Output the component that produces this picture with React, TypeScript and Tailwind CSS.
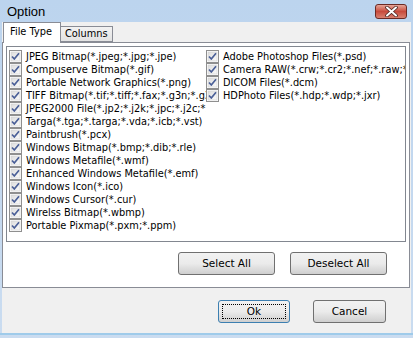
import React from 'react';

const leftTypes = [
  'JPEG Bitmap(*.jpeg;*.jpg;*.jpe)',
  'Compuserve Bitmap(*.gif)',
  'Portable Network Graphics(*.png)',
  'TIFF Bitmap(*.tif;*.tiff;*.fax;*.g3n;*.g3f;*.xif)',
  'JPEG2000 File(*.jp2;*.j2k;*.jpc;*.j2c;*.jpx)',
  'Targa(*.tga;*.targa;*.vda;*.icb;*.vst)',
  'Paintbrush(*.pcx)',
  'Windows Bitmap(*.bmp;*.dib;*.rle)',
  'Windows Metafile(*.wmf)',
  'Enhanced Windows Metafile(*.emf)',
  'Windows Icon(*.ico)',
  'Windows Cursor(*.cur)',
  'Wirelss Bitmap(*.wbmp)',
  'Portable Pixmap(*.pxm;*.ppm)',
];

const rightTypes = [
  'Adobe Photoshop Files(*.psd)',
  'Camera RAW(*.crw;*.cr2;*.nef;*.raw;*.dng)',
  'DICOM Files(*.dcm)',
  'HDPhoto Files(*.hdp;*.wdp;*.jxr)',
];

const CheckBox = () => (
  <svg width="13" height="13" viewBox="0 0 13 13" className="shrink-0">
    <defs>
      <linearGradient id="cbg" x1="0" y1="0" x2="1" y2="1">
        <stop offset="0" stopColor="#dcdcdc" />
        <stop offset="1" stopColor="#fbfbfb" />
      </linearGradient>
    </defs>
    <rect x="0.5" y="0.5" width="12" height="12" fill="#fff" stroke="#8f8f8f" />
    <rect x="2" y="2" width="9" height="9" fill="url(#cbg)" stroke="#cfcfcf" strokeWidth="0.6" />
    <path d="M3 6.5 L5.3 9 L10 3.3" fill="none" stroke="#4a5f97" strokeWidth="1.7" strokeLinejoin="round" />
  </svg>
);

const Row = ({ label }: { label: string }) => (
  <div className="flex items-center h-[13px] gap-[4px]">
    <CheckBox />
    <span className="whitespace-nowrap leading-[13px]">{label}</span>
  </div>
);

const Btn = ({ label, primary, w }: { label: string; primary?: boolean; w: string }) => (
  <button
    className={
      'h-[23px] rounded-[3px] border text-[10.5px] text-black bg-gradient-to-b from-[#f2f2f2] via-[#ebebeb] to-[#cfcfcf] flex items-center justify-center ' +
      w +
      (primary ? ' border-[#3c7fb1] p-[3px]' : ' border-[#707070]')
    }
  >
    {primary ? (
      <span className="w-full h-full border border-dotted border-black flex items-center justify-center">{label}</span>
    ) : (
      label
    )}
  </button>
);

export default function App() {
  return (
    <div
      className="w-[413px] h-[338px] bg-gradient-to-b from-[#bcd4ee] to-[#cadcf0] flex flex-col text-[9.8px] text-black"
      style={{ fontFamily: '"DejaVu Sans", Verdana, sans-serif' }}
    >
      {/* title bar */}
      <div className="h-[22px] flex items-center justify-between pl-[7px] pr-[6px] pt-[2px]">
        <span className="text-[13px] text-black" style={{ fontFamily: '"Liberation Sans", Arial, sans-serif' }}>
          Option
        </span>
        <div className="w-[32px] h-[15px] mt-[-2px] rounded-[3px] border border-[#6b2a24] bg-gradient-to-b from-[#e5a498] via-[#c74a3c] to-[#d88070] flex items-center justify-center">
          <svg width="13" height="11" viewBox="0 0 13 11">
            <path d="M2 1.5 L11 9.5 M11 1.5 L2 9.5" stroke="#4a2420" strokeWidth="3.6" strokeLinecap="round" />
            <path d="M2 1.5 L11 9.5 M11 1.5 L2 9.5" stroke="#fff" strokeWidth="2" strokeLinecap="round" />
          </svg>
        </div>
      </div>

      {/* body */}
      <div className="ml-[2px] mr-[2px] h-[311px] bg-[#f0f0f0] flex flex-col">
        {/* tabs */}
        <div className="h-[20px] flex items-end relative z-10">
          <div className="ml-[1px] w-[58px] h-[21px] border border-b-0 border-[#898c95] bg-white pl-[6px] pb-[2px] mb-[-1px] flex items-center">
            File Type
          </div>
          <div className="h-[16px] border border-l-0 border-[#898c95] bg-gradient-to-b from-[#f2f2f2] to-[#e3e3e3] px-[4px] flex items-center whitespace-nowrap">
            Columns
          </div>
        </div>

        {/* panel */}
        <div className="mr-[1px] h-[246px] border border-[#898c95] bg-white p-[3px] flex flex-col">
          <div className="h-[196px] border border-[#828790] bg-white pt-[3px] pl-[2px] flex overflow-hidden">
            <div className="w-[197px] shrink-0 overflow-hidden flex flex-col">
              {leftTypes.map((t) => (
                <Row key={t} label={t} />
              ))}
            </div>
            <div className="flex flex-col">
              {rightTypes.map((t) => (
                <Row key={t} label={t} />
              ))}
            </div>
          </div>
          <div className="flex justify-end gap-[15px] mt-[10px] pr-[19px]">
            <Btn label="Select All" w="w-[97px]" />
            <Btn label="Deselect All" w="w-[97px]" />
          </div>
        </div>

        {/* footer buttons */}
        <div className="flex justify-end gap-[23px] mt-[12px] pr-[25px]">
          <Btn label="Ok" primary w="w-[72px]" />
          <Btn label="Cancel" w="w-[73px]" />
        </div>
      </div>
      <div className="h-[2px] bg-[#9fcbea]" />
    </div>
  );
}
